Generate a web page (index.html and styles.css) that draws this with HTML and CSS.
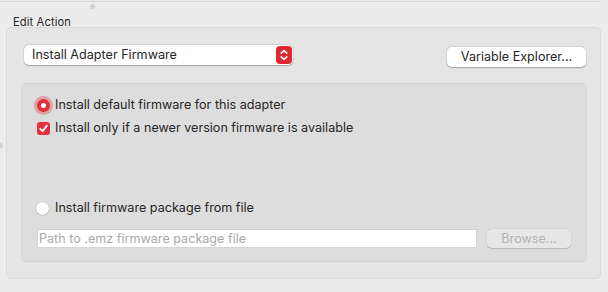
FILE: index.html
```html
<!DOCTYPE html>
<html>
<head>
<meta charset="utf-8">
<link rel="stylesheet" href="styles.css">
</head>
<body>
<div class="window">
  <div class="prev-panel"></div>
  <span class="handle-dot"></span>
  <span class="side-dot"></span>
  <div class="title">Edit Action</div>
  <div class="group">
    <div class="top-row">
      <div class="popup">
        <span class="popup-text">Install Adapter Firmware</span>
        <span class="stepper">
          <svg width="16" height="18" viewBox="0 0 16 18">
            <path d="M5.2 7.2 L8 4.6 L10.8 7.2" fill="none" stroke="#fff" stroke-width="1.6" stroke-linecap="round" stroke-linejoin="round"/>
            <path d="M5.2 10.8 L8 13.4 L10.8 10.8" fill="none" stroke="#fff" stroke-width="1.6" stroke-linecap="round" stroke-linejoin="round"/>
          </svg>
        </span>
      </div>
      <div class="button">Variable Explorer...</div>
    </div>
    <div class="inner">
      <div class="row row-radio1">
        <span class="radio radio-on"><span class="radio-dot"></span></span>
        <span class="label">Install default firmware for this adapter</span>
      </div>
      <div class="row row-check">
        <span class="check">
          <svg width="13" height="13" viewBox="0 0 13 13">
            <path d="M3.2 6.8 L5.5 9.2 L9.9 3.6" fill="none" stroke="#fff" stroke-width="1.8" stroke-linecap="round" stroke-linejoin="round"/>
          </svg>
        </span>
        <span class="label">Install only if a newer version firmware is available</span>
      </div>
      <div class="row row-radio2">
        <span class="radio radio-off"></span>
        <span class="label">Install firmware package from file</span>
      </div>
      <div class="field-row">
        <div class="field">Path to .emz firmware package file</div>
        <div class="button button-disabled">Browse...</div>
      </div>
    </div>
  </div>
</div>
</body>
</html>
```
FILE: styles.css
```css
* { box-sizing: border-box; }
html, body { margin: 0; padding: 0; }
body {
  background: #ececec;
  font-family: "Inter", "Liberation Sans", sans-serif;
  color: #262626;
  width: 608px;
  height: 292px;
  overflow: hidden;
}
.window {
  position: relative;
  width: 608px;
  height: 292px;
}
.prev-panel {
  height: 2px;
  margin-right: 8px;
  background: #e9e9e9;
  border-bottom: 1px solid #d9d9d9;
  border-right: 1px solid #d9d9d9;
  border-bottom-right-radius: 4px;
}
.handle-dot {
  position: absolute;
  left: 90px;
  top: 4px;
  width: 5px;
  height: 5px;
  border-radius: 50%;
  background: #cfcfcf;
}
.side-dot {
  position: absolute;
  left: -2px;
  top: 143px;
  width: 5px;
  height: 5px;
  border-radius: 50%;
  background: #d2d2d2;
}
.title {
  font-size: 11.2px;
  line-height: 14px;
  margin: 13px 0 0 13px;
  height: 12px;
  letter-spacing: 0.1px;
}
.group {
  margin: 0 7px 0 6px;
  height: 252px;
  background: #e5e5e5;
  border: 1px solid #dadada;
  border-radius: 5px;
  padding: 17px 13px 15px 14px;
  display: flex;
  flex-direction: column;
}
.top-row {
  display: flex;
  justify-content: space-between;
  align-items: flex-start;
  height: 38px;
}
.popup {
  margin-left: 3px;
  width: 269px;
  height: 20px;
  background: #fff;
  border-radius: 5px;
  box-shadow: 0 0.5px 1.5px rgba(0,0,0,0.28), 0 0 0 0.5px rgba(0,0,0,0.06);
  display: flex;
  align-items: center;
  justify-content: space-between;
  padding: 0 1px 0 8px;
}
.popup-text {
  font-size: 12.6px;
  line-height: 16px;
}
.stepper {
  width: 16px;
  height: 18px;
  border-radius: 4px;
  background: #e0262f;
  display: flex;
}
.button {
  margin-top: 2px;
  margin-right: 1px;
  width: 139px;
  height: 20px;
  background: #fff;
  border-radius: 5px;
  box-shadow: 0 0.5px 1.5px rgba(0,0,0,0.28), 0 0 0 0.5px rgba(0,0,0,0.06);
  font-size: 12.6px;
  line-height: 20px;
  text-align: center;
}
.inner {
  height: 179px;
  margin-right: 0;
  background: #dddddd;
  border: 1px solid #d5d5d5;
  border-radius: 4px;
  padding: 13px 15px 13px 15px;
  display: flex;
  flex-direction: column;
}
.row {
  display: flex;
  align-items: center;
  height: 16px;
}
.row-check { margin-top: 7px; }
.row-radio2 { margin-top: 64px; }
.label {
  font-size: 12.6px;
  line-height: 16px;
  margin-left: 5px;
}
.radio {
  width: 13px;
  height: 13px;
  border-radius: 50%;
  flex: none;
  display: flex;
  align-items: center;
  justify-content: center;
}
.radio-on {
  background: #e2303a;
  box-shadow: 0 0 0 3px rgba(226, 64, 74, 0.38);
}
.radio-dot {
  width: 5px;
  height: 5px;
  border-radius: 50%;
  background: #fff;
}
.radio-off {
  background: #fff;
  box-shadow: 0 0.5px 1px rgba(0,0,0,0.25), 0 0 0 0.5px rgba(0,0,0,0.08);
}
.check {
  width: 13px;
  height: 13px;
  border-radius: 3px;
  background: #e2303a;
  flex: none;
  display: flex;
}
.row-radio2 .radio { margin-left: -1px; }
.row-radio2 .label { margin-left: 6px; }
.field-row {
  display: flex;
  align-items: center;
  margin-top: 13px;
  height: 19px;
}
.field {
  width: 440px;
  height: 19px;
  background: #fff;
  border: 1px solid #d6d6d6;
  border-top-color: #cfcfcf;
  font-size: 12.6px;
  line-height: 17px;
  color: #a9a9a9;
  padding-left: 1px;
}
.button-disabled {
  margin: 0 0 0 10px;
  width: 84px;
  height: 19px;
  line-height: 19px;
  background: #e7e7e7;
  color: #b3b3b3;
  box-shadow: 0 0.5px 1px rgba(0,0,0,0.15), 0 0 0 0.5px rgba(0,0,0,0.04);
}
```
